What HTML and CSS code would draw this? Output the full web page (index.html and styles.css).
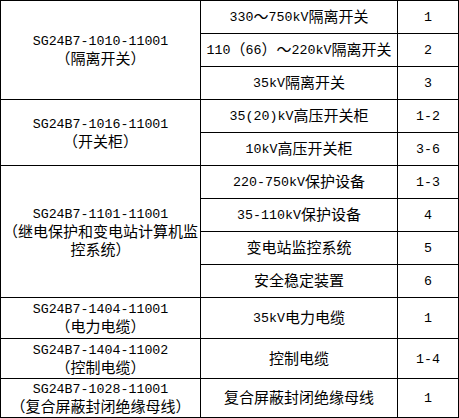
FILE: index.html
```html
<!DOCTYPE html>
<html lang="zh-CN">
<head>
<meta charset="utf-8">
<title>设备编码表</title>
<link rel="stylesheet" href="styles.css">
</head>
<body>
<table class="spec">
  <colgroup>
    <col class="c-code">
    <col class="c-name">
    <col class="c-no">
  </colgroup>
  <tbody>
    <tr class="r">
      <td rowspan="3" class="code">SG24B7-1010-11001<br><span class="zh">（隔离开关）</span></td>
      <td>330<span class="zh">～</span>750kV<span class="zh">隔离开关</span></td>
      <td>1</td>
    </tr>
    <tr class="r">
      <td>110<span class="zh">（</span>66<span class="zh">）～</span>220kV<span class="zh">隔离开关</span></td>
      <td>2</td>
    </tr>
    <tr class="r">
      <td>35kV<span class="zh">隔离开关</span></td>
      <td>3</td>
    </tr>
    <tr class="r">
      <td rowspan="2" class="code">SG24B7-1016-11001<br><span class="zh">（开关柜）</span></td>
      <td>35(20)kV<span class="zh">高压开关柜</span></td>
      <td>1-2</td>
    </tr>
    <tr class="r">
      <td>10kV<span class="zh">高压开关柜</span></td>
      <td>3-6</td>
    </tr>
    <tr class="r">
      <td rowspan="4" class="code">SG24B7-1101-11001<br><span class="zh">（继电保护和变电站计算机监<br>控系统）</span></td>
      <td>220-750kV<span class="zh">保护设备</span></td>
      <td>1-3</td>
    </tr>
    <tr class="r">
      <td>35-110kV<span class="zh">保护设备</span></td>
      <td>4</td>
    </tr>
    <tr class="r">
      <td><span class="zh">变电站监控系统</span></td>
      <td>5</td>
    </tr>
    <tr class="r">
      <td><span class="zh">安全稳定装置</span></td>
      <td>6</td>
    </tr>
    <tr class="r-a">
      <td class="code">SG24B7-1404-11001<br><span class="zh">（电力电缆）</span></td>
      <td>35kV<span class="zh">电力电缆</span></td>
      <td>1</td>
    </tr>
    <tr class="r-b">
      <td class="code">SG24B7-1404-11002<br><span class="zh">（控制电缆）</span></td>
      <td><span class="zh">控制电缆</span></td>
      <td>1-4</td>
    </tr>
    <tr class="r-c">
      <td class="code">SG24B7-1028-11001<br><span class="zh">（复合屏蔽封闭绝缘母线）</span></td>
      <td><span class="zh">复合屏蔽封闭绝缘母线</span></td>
      <td>1</td>
    </tr>
  </tbody>
</table>
</body>
</html>
```

FILE: styles.css
```css
html, body {
  margin: 0;
  padding: 0;
  background: #ffffff;
}

.spec {
  border-collapse: collapse;
  table-layout: fixed;
  width: 458px;
  color: #000000;
  font-family: "Liberation Mono", "Noto Sans CJK SC", monospace;
  font-size: 13.3px;
  line-height: 18px;
}

.c-code { width: 200px; }
.c-name { width: 197px; }
.c-no { width: 61px; }

.spec td {
  border: 1px solid #000000;
  padding: 2px 0 0 0;
  text-align: center;
  vertical-align: middle;
  white-space: nowrap;
}

.zh {
  font-family: "Noto Sans CJK SC", sans-serif;
  font-size: 15px;
  line-height: 12px;
  vertical-align: -1px;
}

.r { height: 33px; }
.r-a { height: 41px; }
.r-b { height: 40px; }
.r-c { height: 39px; }
```
